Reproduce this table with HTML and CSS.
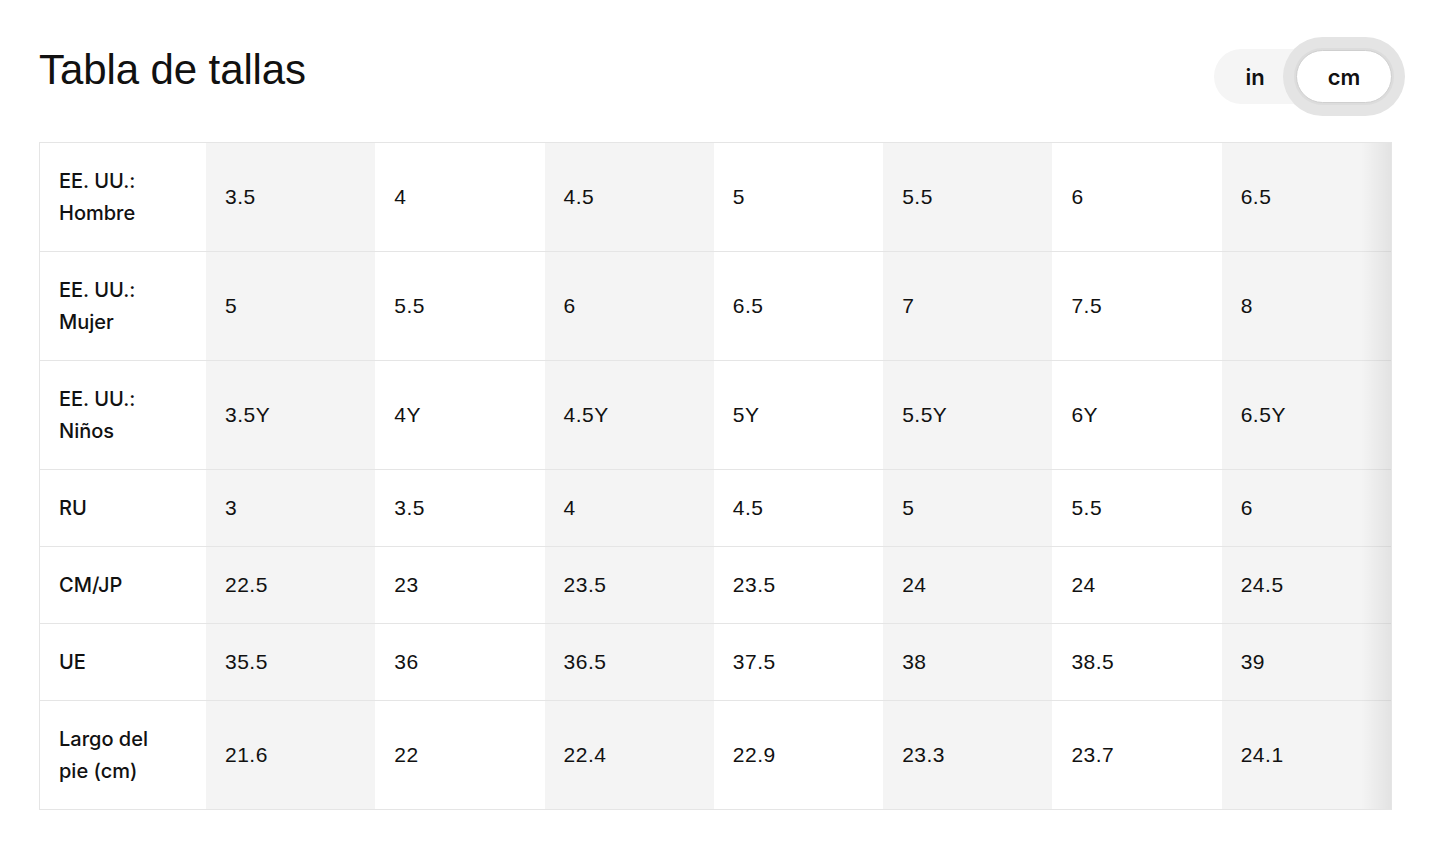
FILE: index.html
```html
<!DOCTYPE html>
<html lang="es">
<head>
<meta charset="utf-8">
<title>Tabla de tallas</title>
<link rel="stylesheet" href="styles.css">
</head>
<body>
<main class="page">
  <header class="header">
    <h1 class="title">Tabla de tallas</h1>
    <div class="toggle">
      <button class="toggle-btn">in</button>
      <button class="toggle-btn is-active">cm</button>
    </div>
  </header>
  <div class="table-wrap">
    <table class="sizes">
      <colgroup>
        <col class="col-label">
        <col><col><col><col><col><col><col>
      </colgroup>
      <tbody>
        <tr><th>EE. UU.:<br>Hombre</th><td>3.5</td><td>4</td><td>4.5</td><td>5</td><td>5.5</td><td>6</td><td>6.5</td></tr>
        <tr><th>EE. UU.:<br>Mujer</th><td>5</td><td>5.5</td><td>6</td><td>6.5</td><td>7</td><td>7.5</td><td>8</td></tr>
        <tr><th>EE. UU.:<br>Niños</th><td>3.5Y</td><td>4Y</td><td>4.5Y</td><td>5Y</td><td>5.5Y</td><td>6Y</td><td>6.5Y</td></tr>
        <tr><th>RU</th><td>3</td><td>3.5</td><td>4</td><td>4.5</td><td>5</td><td>5.5</td><td>6</td></tr>
        <tr><th>CM/JP</th><td>22.5</td><td>23</td><td>23.5</td><td>23.5</td><td>24</td><td>24</td><td>24.5</td></tr>
        <tr><th>UE</th><td>35.5</td><td>36</td><td>36.5</td><td>37.5</td><td>38</td><td>38.5</td><td>39</td></tr>
        <tr><th>Largo del<br>pie (cm)</th><td>21.6</td><td>22</td><td>22.4</td><td>22.9</td><td>23.3</td><td>23.7</td><td>24.1</td></tr>
      </tbody>
    </table>
    <div class="fade"></div>
  </div>
</main>
</body>
</html>
```

FILE: styles.css
```css
* { box-sizing: border-box; }
html, body { margin: 0; padding: 0; background: #fff; }
body {
  font-family: "Liberation Sans", Arial, sans-serif;
  color: #111;
}
.page {
  width: 1353px;
  margin-left: 39px;
}
.header {
  display: flex;
  justify-content: space-between;
  align-items: center;
  height: 142px;
  padding-top: 11px;
}
.title {
  margin: 0 0 14px 0;
  font-size: 42px;
  font-weight: 400;
  letter-spacing: -0.1px;
  line-height: 48px;
  color: #111;
}
.toggle {
  display: flex;
  align-items: center;
  width: 178px;
  height: 55px;
  background: #f5f5f5;
  border-radius: 28px;
  padding: 1px 0;
}
.toggle-btn {
  border: none;
  background: transparent;
  font-family: "Inter", "Liberation Sans", sans-serif;
  font-size: 22px;
  font-weight: 600;
  color: #111;
  height: 53px;
  border-radius: 27px;
  padding: 0;
  cursor: pointer;
}
.toggle-btn:first-child { width: 82px; }
.toggle-btn.is-active {
  width: 96px;
  background: #fff;
  border: 1px solid #cfcfcf;
  box-shadow: 0 0 0 2px #dcdcdc, 0 0 0 13px #e4e4e4;
}
.table-wrap {
  position: relative;
  border: 1px solid #e5e5e5;
}
.sizes {
  width: 100%;
  border-collapse: collapse;
  table-layout: fixed;
  font-size: 21px;
  line-height: 32px;
  letter-spacing: 0.5px;
}
.col-label { width: 166px; }
.sizes th, .sizes td {
  text-align: left;
  vertical-align: middle;
  padding: 22px 19px;
  border-top: 1px solid #e5e5e5;
}
.sizes tr:first-child th, .sizes tr:first-child td { border-top: none; }
.sizes th {
  font-family: "Inter", "Liberation Sans", sans-serif;
  font-weight: 500;
  font-size: 20px;
  letter-spacing: 0;
}
.sizes td { font-weight: 400; }
.sizes td:nth-child(even) { background: #f4f4f4; }
.fade {
  position: absolute;
  top: 0;
  right: 0;
  bottom: 0;
  width: 30px;
  background: linear-gradient(to right, rgba(0,0,0,0), rgba(0,0,0,0.07));
  pointer-events: none;
}
```
